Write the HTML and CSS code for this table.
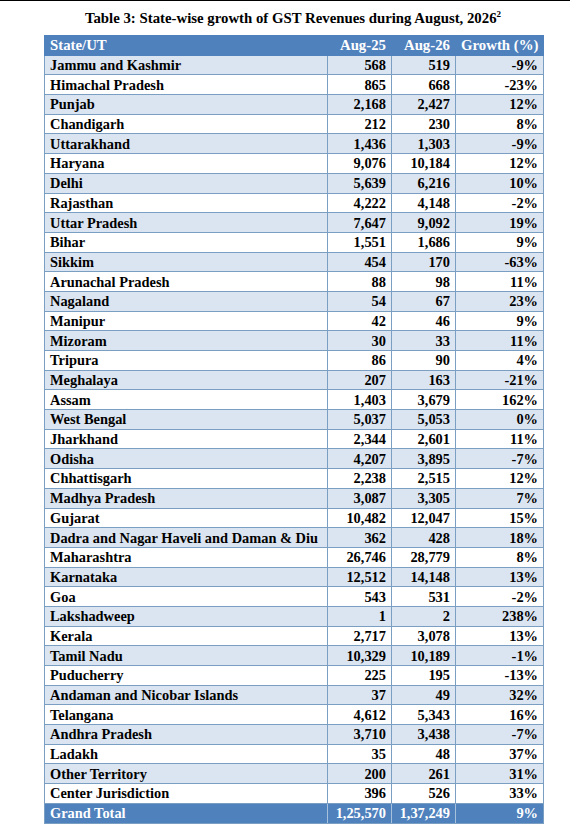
FILE: index.html
```html
<!DOCTYPE html>
<html>
<head>
<meta charset="utf-8">
<link rel="stylesheet" href="styles.css">
</head>
<body>
<div class="page">
<h1 class="title">Table 3: State-wise growth of GST Revenues during August, 2026<sup>2</sup></h1>
<table class="gst">
<colgroup><col class="c-state"><col class="c-num"><col class="c-num"><col class="c-growth"></colgroup>
<thead>
<tr class="head"><th class="l">State/UT</th><th>Aug-25</th><th>Aug-26</th><th>Growth (%)</th></tr>
</thead>
<tbody>
<tr><td class="l">Jammu and Kashmir</td><td>568</td><td>519</td><td>-9%</td></tr>
<tr><td class="l">Himachal Pradesh</td><td>865</td><td>668</td><td>-23%</td></tr>
<tr><td class="l">Punjab</td><td>2,168</td><td>2,427</td><td>12%</td></tr>
<tr><td class="l">Chandigarh</td><td>212</td><td>230</td><td>8%</td></tr>
<tr><td class="l">Uttarakhand</td><td>1,436</td><td>1,303</td><td>-9%</td></tr>
<tr><td class="l">Haryana</td><td>9,076</td><td>10,184</td><td>12%</td></tr>
<tr><td class="l">Delhi</td><td>5,639</td><td>6,216</td><td>10%</td></tr>
<tr><td class="l">Rajasthan</td><td>4,222</td><td>4,148</td><td>-2%</td></tr>
<tr><td class="l">Uttar Pradesh</td><td>7,647</td><td>9,092</td><td>19%</td></tr>
<tr><td class="l">Bihar</td><td>1,551</td><td>1,686</td><td>9%</td></tr>
<tr><td class="l">Sikkim</td><td>454</td><td>170</td><td>-63%</td></tr>
<tr><td class="l">Arunachal Pradesh</td><td>88</td><td>98</td><td>11%</td></tr>
<tr><td class="l">Nagaland</td><td>54</td><td>67</td><td>23%</td></tr>
<tr><td class="l">Manipur</td><td>42</td><td>46</td><td>9%</td></tr>
<tr><td class="l">Mizoram</td><td>30</td><td>33</td><td>11%</td></tr>
<tr><td class="l">Tripura</td><td>86</td><td>90</td><td>4%</td></tr>
<tr><td class="l">Meghalaya</td><td>207</td><td>163</td><td>-21%</td></tr>
<tr><td class="l">Assam</td><td>1,403</td><td>3,679</td><td>162%</td></tr>
<tr><td class="l">West Bengal</td><td>5,037</td><td>5,053</td><td>0%</td></tr>
<tr><td class="l">Jharkhand</td><td>2,344</td><td>2,601</td><td>11%</td></tr>
<tr><td class="l">Odisha</td><td>4,207</td><td>3,895</td><td>-7%</td></tr>
<tr><td class="l">Chhattisgarh</td><td>2,238</td><td>2,515</td><td>12%</td></tr>
<tr><td class="l">Madhya Pradesh</td><td>3,087</td><td>3,305</td><td>7%</td></tr>
<tr><td class="l">Gujarat</td><td>10,482</td><td>12,047</td><td>15%</td></tr>
<tr><td class="l">Dadra and Nagar Haveli and Daman &amp; Diu</td><td>362</td><td>428</td><td>18%</td></tr>
<tr><td class="l">Maharashtra</td><td>26,746</td><td>28,779</td><td>8%</td></tr>
<tr><td class="l">Karnataka</td><td>12,512</td><td>14,148</td><td>13%</td></tr>
<tr><td class="l">Goa</td><td>543</td><td>531</td><td>-2%</td></tr>
<tr><td class="l">Lakshadweep</td><td>1</td><td>2</td><td>238%</td></tr>
<tr><td class="l">Kerala</td><td>2,717</td><td>3,078</td><td>13%</td></tr>
<tr><td class="l">Tamil Nadu</td><td>10,329</td><td>10,189</td><td>-1%</td></tr>
<tr><td class="l">Puducherry</td><td>225</td><td>195</td><td>-13%</td></tr>
<tr><td class="l">Andaman and Nicobar Islands</td><td>37</td><td>49</td><td>32%</td></tr>
<tr><td class="l">Telangana</td><td>4,612</td><td>5,343</td><td>16%</td></tr>
<tr><td class="l">Andhra Pradesh</td><td>3,710</td><td>3,438</td><td>-7%</td></tr>
<tr><td class="l">Ladakh</td><td>35</td><td>48</td><td>37%</td></tr>
<tr><td class="l">Other Territory</td><td>200</td><td>261</td><td>31%</td></tr>
<tr><td class="l">Center Jurisdiction</td><td>396</td><td>526</td><td>33%</td></tr>
</tbody>
<tfoot>
<tr class="total"><td class="l">Grand Total</td><td>1,25,570</td><td>1,37,249</td><td>9%</td></tr>
</tfoot>
</table>
</div>
</body>
</html>
```
FILE: styles.css
```css
html, body {
  margin: 0;
  padding: 0;
  background: #ffffff;
}
.page {
  border-top: 1px solid #000000;
  padding-top: 8px;
  font-family: "Liberation Serif", "Times New Roman", serif;
  color: #000000;
}
.title {
  margin: 0 0 8px 0;
  padding-left: 16px;
  text-align: center;
  font-size: 14.8px;
  font-weight: bold;
  line-height: 18px;
}
.title sup {
  font-size: 9px;
  line-height: 0;
}
.gst {
  margin-left: 44px;
  width: 499px;
  border-collapse: collapse;
  table-layout: fixed;
  font-size: 14.4px;
  font-weight: bold;
}
.c-state { width: 283px; }
.c-num { width: 64px; }
.c-growth { width: 88px; }
.gst th, .gst td {
  height: 18.7px;
  padding: 0 5px 0 5px;
  text-align: right;
  border: 1px solid #7a9fc2;
  white-space: nowrap;
  line-height: 16px;
  vertical-align: middle;
}
.gst .l { text-align: left; }
.head th {
  background: #4f81bd;
  color: #ffffff;
  border-color: #4f81bd;
  font-size: 14.8px;
}
.gst tbody tr:nth-child(odd) td { background: #dbe5f1; }
.gst tbody tr:nth-child(even) td { background: #ffffff; }
.total td {
  background: #4f81bd;
  color: #ffffff;
  border-color: #7a9fc2;
  border-left-color: #a7c0dc;
  border-right-color: #a7c0dc;
}
.total td:first-child { border-left-color: #7a9fc2; }
.total td:last-child { border-right-color: #7a9fc2; }
```
